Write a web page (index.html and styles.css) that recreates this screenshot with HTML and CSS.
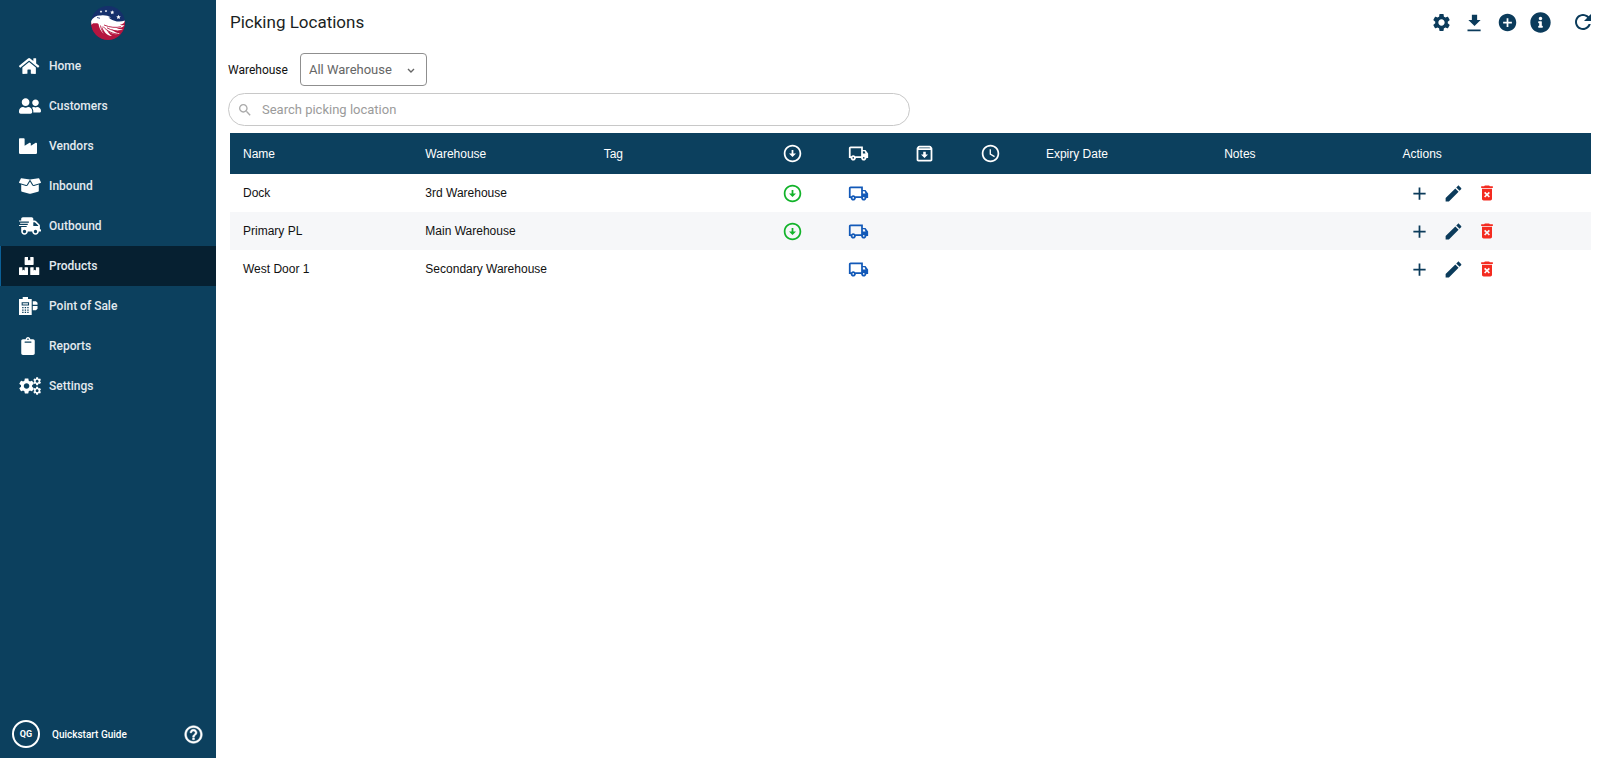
FILE: index.html
```html
<!DOCTYPE html>
<html lang="en">
<head>
<meta charset="utf-8">
<title>Picking Locations</title>
<link rel="stylesheet" href="styles.css">
</head>
<body>
<svg class="sprite" aria-hidden="true">
  <symbol id="gear" viewBox="0 0 24 24"><path d="M19.14 12.94c.04-.3.06-.61.06-.94 0-.32-.02-.64-.07-.94l2.03-1.58c.18-.14.23-.41.12-.61l-1.92-3.32c-.12-.22-.37-.29-.59-.22l-2.39.96c-.5-.38-1.03-.7-1.62-.94l-.36-2.54c-.04-.24-.24-.41-.48-.41h-3.84c-.24 0-.43.17-.47.41l-.36 2.54c-.59.24-1.13.57-1.62.94l-2.39-.96c-.22-.08-.47 0-.59.22L2.74 8.87c-.12.21-.08.47.12.61l2.03 1.58c-.05.3-.09.63-.09.94s.02.64.07.94l-2.03 1.58c-.18.14-.23.41-.12.61l1.92 3.32c.12.22.37.29.59.22l2.39-.96c.5.38 1.03.7 1.62.94l.36 2.54c.05.24.24.41.48.41h3.84c.24 0 .44-.17.47-.41l.36-2.54c.59-.24 1.13-.56 1.62-.94l2.39.96c.22.08.47 0 .59-.22l1.92-3.32c.12-.22.07-.47-.12-.61l-2.01-1.58zM12 15.6c-1.98 0-3.6-1.62-3.6-3.6s1.62-3.6 3.6-3.6 3.6 1.62 3.6 3.6-1.62 3.6-3.6 3.6z"/></symbol>
  <symbol id="down" viewBox="0 0 24 24"><path d="M12 4c4.41 0 8 3.59 8 8s-3.59 8-8 8-8-3.59-8-8 3.59-8 8-8m0-2C6.48 2 2 6.48 2 12s4.48 10 10 10 10-4.48 10-10S17.52 2 12 2zm1 10V8h-2v4H8l4 4 4-4h-3z"/></symbol>
  <symbol id="truck" viewBox="0 0 24 24"><path d="M20 8h-3V4H3c-1.1 0-2 .9-2 2v11h2c0 1.66 1.34 3 3 3s3-1.34 3-3h6c0 1.66 1.34 3 3 3s3-1.34 3-3h2v-5l-3-4zM6 18c-.55 0-1-.45-1-1s.45-1 1-1 1 .45 1 1-.45 1-1 1zm9-3H8.220C7.670 14.390 6.890 14 6 14s-1.670.39-2.220 1H3V6h12v9zm3 3c-.55 0-1-.45-1-1s.45-1 1-1 1 .45 1 1-.45 1-1 1zm-1-6V9.500h2l1 2.500H17z"/></symbol>
  <symbol id="plus" viewBox="0 0 24 24"><path d="M19 13h-6v6h-2v-6H5v-2h6V5h2v6h6v2z"/></symbol>
  <symbol id="pencil" viewBox="0 0 24 24"><path d="M3 17.25V21h3.75L17.81 9.94l-3.75-3.75L3 17.25zM20.71 7.04c.39-.39.39-1.02 0-1.41l-2.34-2.34c-.39-.39-1.02-.39-1.41 0l-1.83 1.83 3.75 3.75 1.83-1.83z"/></symbol>
  <symbol id="trash" viewBox="0 0 24 24"><path d="M6 19c0 1.1.9 2 2 2h8c1.1 0 2-.9 2-2V7H6v12zm2.46-7.12l1.41-1.41L12 12.59l2.12-2.12 1.41 1.41L13.41 14l2.12 2.12-1.41 1.41L12 15.41l-2.12 2.12-1.41-1.41L10.59 14l-2.13-2.12zM15.5 4l-1-1h-5l-1 1H5v2h14V4z"/></symbol>
  <symbol id="star" viewBox="0 0 24 24"><path d="M12 1l3.200 7.300 7.800.8-5.900 5.200 1.700 7.700L12 18l-6.800 4 1.700-7.700L1 9.100l7.800-.8z"/></symbol>
</svg>
<div class="app">
  <aside class="sidebar">
    <svg class="logo" viewBox="0 0 34 34" role="img" aria-label="Eagle logo">
      <defs><clipPath id="disc"><circle cx="17" cy="17" r="17"/></clipPath></defs>
      <g clip-path="url(#disc)">
        <rect width="34" height="34" fill="#15306b"/>
        <path d="M0 16C8 14 20 20 34 15V34H0Z" fill="#b5153f"/>
        <path d="M0 15C2 11 6 9 10 9.500C14 9 17 10 20 11.500L17.500 11.500L19.500 13C23 15.500 29 16.500 34 14.500C33.500 17 31.500 18.500 29 18.700C30.500 19.500 32 19.500 33.500 19C32 21.500 29 22.500 25 21.800C27 23 29.500 23.600 32 23C29 25.600 25 25.500 20.500 23.200C23 25.800 26 27 29 27.300C25 29.500 19.500 28 15.500 23.500C17 26.500 18.500 28.500 21 30C15 29.500 12.500 25 11 20.500C10.800 23 11.500 25.500 13 28C9.500 25.500 8 21 7.500 18C6 17 5 17.500 3.500 17.300C2.500 17 1.500 17 .5 19Z" fill="#fff"/>
        <path d="M13 19C19 21.500 25 22 30 20.700M12 20.500C16 25 22 28 27 28M9.500 19.500C10 23 12 27 15 30M16 21.800C20 24.300 26 25.500 30 24.500" fill="none" stroke="#b5153f" stroke-width=".9"/>
        <path d="M6 11.500L9 12.300" stroke="#15306b" stroke-width=".8"/>
      </g>
      <g fill="#fff"><use href="#star" x="8.500" y="4" width="3" height="3"/><use href="#star" x="13.500" y="3.500" width="3" height="3"/><use href="#star" x="19" y="4" width="4.500" height="4.500"/><use href="#star" x="25" y="8.500" width="5" height="5"/></g>
    </svg>
    <nav class="nav">
      <a class="nav-item" href="#"><svg preserveAspectRatio="xMinYMid" viewBox="0 0 576 512"><path d="M280.37 148.26L96 300.11V464a16 16 0 0 0 16 16l112.06-.29a16 16 0 0 0 15.92-16V368a16 16 0 0 1 16-16h64a16 16 0 0 1 16 16v95.64a16 16 0 0 0 16 16.05L464 480a16 16 0 0 0 16-16V300L295.67 148.26a12.19 12.19 0 0 0-15.3 0zM571.6 251.47L488 182.56V44.05a12 12 0 0 0-12-12h-56a12 12 0 0 0-12 12v72.61L318.47 43a48 48 0 0 0-61 0L4.34 251.47a12 12 0 0 0-1.6 16.9l25.5 31A12 12 0 0 0 45.15 301l235.22-193.74a12.19 12.19 0 0 1 15.3 0L530.9 301a12 12 0 0 0 16.9-1.6l25.5-31a12 12 0 0 0-1.7-16.93z"/></svg><span>Home</span></a>
      <a class="nav-item" href="#"><svg preserveAspectRatio="xMinYMid" viewBox="0 0 640 512"><path d="M192 256c61.9 0 112-50.1 112-112S253.9 32 192 32 80 82.1 80 144s50.1 112 112 112zm76.8 32h-8.3c-20.8 10-43.9 16-68.5 16s-47.6-6-68.5-16h-8.3C51.6 288 0 339.6 0 403.2V432c0 26.5 21.5 48 48 48h288c26.5 0 48-21.5 48-48v-28.8c0-63.6-51.6-115.2-115.2-115.2zM480 256c53 0 96-43 96-96s-43-96-96-96-96 43-96 96 43 96 96 96zm48 32h-3.8c-13.9 4.8-28.6 8-44.2 8s-30.3-3.2-44.2-8H432c-20.4 0-39.2 5.9-55.7 15.4 24.4 26.3 39.7 61.2 39.7 99.8v38.4c0 2.2-.5 4.3-.6 6.4H592c26.5 0 48-21.5 48-48 0-61.9-50.1-112-112-112z"/></svg><span>Customers</span></a>
      <a class="nav-item" href="#"><svg preserveAspectRatio="xMinYMid" viewBox="0 0 512 512"><path d="M475.115 163.781L336 252.309v-68.28c0-18.916-20.931-30.399-36.885-20.248L160 252.309V56c0-13.255-10.745-24-24-24H24C10.745 32 0 42.745 0 56v400c0 13.255 10.745 24 24 24h464c13.255 0 24-10.745 24-24V184.029c0-18.917-20.931-30.399-36.885-20.248z"/></svg><span>Vendors</span></a>
      <a class="nav-item" href="#"><svg preserveAspectRatio="xMinYMid" viewBox="0 0 640 512"><path d="M425.7 256c-16.9 0-32.8-9-41.4-23.4L320 126l-64.2 106.6c-8.7 14.5-24.6 23.5-41.5 23.5-4.5 0-9-.6-13.3-1.9L64 215v178c0 14.7 10 27.5 24.2 31l216.2 54.1c10.2 2.5 20.9 2.5 31 0L551.8 424c14.2-3.6 24.2-16.4 24.2-31V215l-137 39.1c-4.3 1.3-8.8 1.9-13.3 1.9zm212.6-112.2L586.8 41c-3.1-6.2-9.8-9.8-16.7-8.9L320 64l91.7 152.1c3.8 6.3 11.4 9.3 18.5 7.3l197.9-56.5c9.9-2.9 14.7-13.9 10.2-23.1zM53.2 41L1.7 143.8c-4.6 9.2.3 20.2 10.1 23l197.9 56.5c7.1 2 14.7-1 18.5-7.3L320 64 69.8 32.1c-6.9-.8-13.5 2.7-16.6 8.9z"/></svg><span>Inbound</span></a>
      <a class="nav-item" href="#"><svg preserveAspectRatio="xMinYMid" viewBox="0 0 640 512"><path d="M624 352h-16V243.9c0-12.7-5.1-24.9-14.1-33.9L494 110.1c-9-9-21.2-14.1-33.9-14.1H416V48c0-26.5-21.5-48-48-48H112C85.5 0 64 21.5 64 48v48H8c-4.4 0-8 3.6-8 8v16c0 4.4 3.6 8 8 8h272c4.4 0 8 3.6 8 8v16c0 4.4-3.6 8-8 8H40c-4.4 0-8 3.6-8 8v16c0 4.4 3.6 8 8 8h208c4.4 0 8 3.6 8 8v16c0 4.4-3.6 8-8 8H8c-4.4 0-8 3.6-8 8v16c0 4.4 3.6 8 8 8h208c4.4 0 8 3.6 8 8v16c0 4.4-3.6 8-8 8H64v128c0 53 43 96 96 96s96-43 96-96h128c0 53 43 96 96 96s96-43 96-96h48c8.8 0 16-7.2 16-16v-32c0-8.8-7.2-16-16-16zM160 464c-26.5 0-48-21.5-48-48s21.5-48 48-48 48 21.5 48 48-21.5 48-48 48zm320 0c-26.5 0-48-21.5-48-48s21.5-48 48-48 48 21.5 48 48-21.5 48-48 48zm80-208H416V144h44.1l99.9 99.9V256z"/></svg><span>Outbound</span></a>
      <a class="nav-item active" href="#" aria-current="page"><svg preserveAspectRatio="xMinYMid" viewBox="0 0 576 512"><path d="M560 288h-80v96l-32-21.3-32 21.3v-96h-80c-8.8 0-16 7.2-16 16v192c0 8.8 7.2 16 16 16h224c8.8 0 16-7.2 16-16V304c0-8.8-7.2-16-16-16zm-384-64h224c8.8 0 16-7.2 16-16V16c0-8.8-7.2-16-16-16h-80v96l-32-21.3L256 96V0h-80c-8.8 0-16 7.2-16 16v192c0 8.8 7.2 16 16 16zm64 64h-80v96l-32-21.3L96 384v-96H16c-8.8 0-16 7.2-16 16v192c0 8.8 7.2 16 16 16h224c8.8 0 16-7.2 16-16V304c0-8.8-7.2-16-16-16z"/></svg><span>Products</span></a>
      <a class="nav-item" href="#"><svg preserveAspectRatio="xMinYMid" viewBox="0 0 18 17"><path fill-rule="evenodd" d="M3.500 0h5v2H12v15H0V2h3.500zM2.500 5v3h7V5zM3 9.500v1.200h1.300V9.500zm2.400 0v1.200h1.300V9.500zm2.400 0v1.200h1.300V9.500zM3 11.700v1.200h1.300v-1.200zm2.400 0v1.200h1.300v-1.200zm2.400 0v1.200h1.300v-1.200zM3 13.900v1.200h1.300v-1.200zm2.400 0v1.200h1.300v-1.200zm2.400 0v1.200h1.300v-1.200z"/><path d="M3.500 6h5v1h-5zM13 4h3l1.500 1.500V7.300H13zM13 8.500h4.500v2.500L16 12.500h-3z"/></svg><span>Point of Sale</span></a>
      <a class="nav-item" href="#"><svg preserveAspectRatio="xMinYMid" viewBox="-64 0 512 512"><path d="M384 112v352c0 26.510-21.490 48-48 48H48c-26.510 0-48-21.490-48-48V112c0-26.510 21.490-48 48-48h80c0-35.290 28.710-64 64-64s64 28.710 64 64h80c26.510 0 48 21.490 48 48zM192 40c-13.255 0-24 10.745-24 24s10.745 24 24 24 24-10.745 24-24-10.745-24-24-24m96 114v-20a6 6 0 0 0-6-6H102a6 6 0 0 0-6 6v20a6 6 0 0 0 6 6h180a6 6 0 0 0 6-6z"/></svg><span>Reports</span></a>
      <a class="nav-item" href="#"><svg preserveAspectRatio="xMinYMid" viewBox="0 0 640 512"><use href="#gear" x="-50" y="-14" width="540" height="540"/><use href="#gear" x="385" y="-25" width="285" height="285"/><use href="#gear" x="385" y="252" width="285" height="285"/></svg><span>Settings</span></a>
    </nav>
    <footer class="guide">
      <span class="avatar">QG</span>
      <a class="guide-link" href="#">Quickstart Guide</a>
      <button class="icon-btn help" type="button" aria-label="Help"><svg viewBox="0 0 24 24"><path stroke="currentColor" stroke-width=".6" d="M11 18h2v-2h-2v2zm1-16C6.480 2 2 6.480 2 12s4.480 10 10 10 10-4.480 10-10S17.520 2 12 2zm0 18c-4.410 0-8-3.590-8-8s3.590-8 8-8 8 3.590 8 8-3.590 8-8 8zm0-14c-2.210 0-4 1.790-4 4h2c0-1.100.9-2 2-2s2 .9 2 2c0 2-3 1.750-3 5h2c0-2.250 3-2.500 3-5 0-2.210-1.790-4-4-4z"/></svg></button>
    </footer>
  </aside>
  <main class="main">
    <header class="toolbar">
      <h1>Picking Locations</h1>
      <div class="tools">
        <button class="icon-btn" type="button" aria-label="Settings"><svg><use href="#gear"/></svg></button>
        <button class="icon-btn" type="button" aria-label="Download"><svg viewBox="0 0 24 24"><path d="M5 20h14v1.900H4v-1.900zM19 9h-4V3H9v6H5l7 7 7-7z"/></svg></button>
        <button class="icon-btn" type="button" aria-label="Add"><svg viewBox="0 0 24 24"><path d="M12 2C6.480 2 2 6.480 2 12s4.480 10 10 10 10-4.480 10-10S17.520 2 12 2zm5 11h-4v4h-2v-4H7v-2h4V7h2v4h4v2z"/></svg></button>
        <button class="icon-btn" type="button" aria-label="Info"><svg viewBox="0 0 512 512"><path d="M256 8C119.043 8 8 119.083 8 256c0 136.997 111.043 248 248 248s248-111.003 248-248C504 119.083 392.957 8 256 8zm0 110c23.196 0 42 18.804 42 42s-18.804 42-42 42-42-18.804-42-42 18.804-42 42-42zm56 254c0 6.627-5.373 12-12 12h-88c-6.627 0-12-5.373-12-12v-24c0-6.627 5.373-12 12-12h12v-64h-12c-6.627 0-12-5.373-12-12v-24c0-6.627 5.373-12 12-12h64c6.627 0 12 5.373 12 12v100h12c6.627 0 12 5.373 12 12v24z"/></svg></button>
        <button class="icon-btn refresh" type="button" aria-label="Refresh"><svg viewBox="0 0 24 24"><path d="M17.650 6.350C16.200 4.900 14.210 4 12 4c-4.420 0-7.990 3.580-7.990 8s3.570 8 7.990 8c3.730 0 6.840-2.550 7.730-6h-2.080c-.82 2.330-3.040 4-5.650 4-3.310 0-6-2.690-6-6s2.690-6 6-6c1.660 0 3.140.69 4.220 1.780L13 11h7V4l-2.350 2.350z"/></svg></button>
      </div>
    </header>
    <section class="filters">
      <div class="filter">
        <label for="warehouse">Warehouse</label>
        <div class="select-wrap">
          <select id="warehouse"><option>All Warehouse</option></select>
          <svg class="chevron" viewBox="0 0 8 5"><path d="M1 1l3 3 3-3"/></svg>
        </div>
      </div>
      <div class="search">
        <svg viewBox="0 0 24 24"><path d="M15.500 14h-.79l-.28-.27C15.410 12.590 16 11.110 16 9.500 16 5.910 13.090 3 9.500 3S3 5.910 3 9.500 5.910 16 9.500 16c1.610 0 3.090-.59 4.230-1.570l.27.28v.79l5 4.990L20.490 19l-4.990-5zm-6 0C7.010 14 5 11.990 5 9.500S7.010 5 9.500 5 14 7.010 14 9.500 11.990 14 9.500 14z"/></svg>
        <input type="search" placeholder="Search picking location" aria-label="Search picking location">
      </div>
    </section>
    <table class="grid">
      <colgroup><col class="c-name"><col class="c-text"><col class="c-text"><col class="c-icon"><col class="c-icon"><col class="c-icon"><col class="c-icon"><col class="c-text"><col class="c-text"><col></colgroup>
      <thead>
        <tr>
          <th>Name</th><th>Warehouse</th><th>Tag</th>
          <th aria-label="Receiving"><svg class="ico"><use href="#down"/></svg></th>
          <th aria-label="Shipping"><svg class="ico"><use href="#truck"/></svg></th>
          <th aria-label="Storage"><svg class="ico" viewBox="0 0 24 24"><path d="M20.540 5.230l-1.390-1.680C18.880 3.210 18.470 3 18 3H6c-.47 0-.88.21-1.160.55L3.460 5.230C3.170 5.570 3 6.020 3 6.500V19c0 1.100.9 2 2 2h14c1.100 0 2-.9 2-2V6.500c0-.48-.17-.93-.46-1.270zM6.240 5h11.520l.83 1H5.420l.82-1zM5 19V8h14v11H5zm8.450-9h-2.900v3H8l4 4 4-4h-2.550z"/></svg></th>
          <th aria-label="Expiry"><svg class="ico" viewBox="0 0 24 24"><path d="M11.990 2C6.470 2 2 6.480 2 12s4.470 10 9.990 10C17.520 22 22 17.520 22 12S17.520 2 11.990 2zM12 20c-4.420 0-8-3.580-8-8s3.580-8 8-8 8 3.580 8 8-3.580 8-8 8zm.5-13H11v6l5.250 3.150.75-1.230-4.500-2.670z"/></svg></th>
          <th>Expiry Date</th><th>Notes</th><th>Actions</th>
        </tr>
      </thead>
      <tbody>
        <tr>
          <td>Dock</td><td>3rd Warehouse</td><td></td>
          <td><svg class="ico green"><use href="#down"/></svg></td><td><svg class="ico blue"><use href="#truck"/></svg></td><td></td><td></td><td></td><td></td>
          <td><div class="actions"><button class="icon-btn" type="button" aria-label="Add"><svg><use href="#plus"/></svg></button><button class="icon-btn" type="button" aria-label="Edit"><svg><use href="#pencil"/></svg></button><button class="icon-btn danger" type="button" aria-label="Delete"><svg><use href="#trash"/></svg></button></div></td>
        </tr>
        <tr>
          <td>Primary PL</td><td>Main Warehouse</td><td></td>
          <td><svg class="ico green"><use href="#down"/></svg></td><td><svg class="ico blue"><use href="#truck"/></svg></td><td></td><td></td><td></td><td></td>
          <td><div class="actions"><button class="icon-btn" type="button" aria-label="Add"><svg><use href="#plus"/></svg></button><button class="icon-btn" type="button" aria-label="Edit"><svg><use href="#pencil"/></svg></button><button class="icon-btn danger" type="button" aria-label="Delete"><svg><use href="#trash"/></svg></button></div></td>
        </tr>
        <tr>
          <td>West Door 1</td><td>Secondary Warehouse</td><td></td>
          <td></td><td><svg class="ico blue"><use href="#truck"/></svg></td><td></td><td></td><td></td><td></td>
          <td><div class="actions"><button class="icon-btn" type="button" aria-label="Add"><svg><use href="#plus"/></svg></button><button class="icon-btn" type="button" aria-label="Edit"><svg><use href="#pencil"/></svg></button><button class="icon-btn danger" type="button" aria-label="Delete"><svg><use href="#trash"/></svg></button></div></td>
        </tr>
      </tbody>
    </table>
  </main>
</div>
</body>
</html>
```
FILE: styles.css
```css
* { box-sizing: border-box; }
body { margin: 0; font-family: Roboto, sans-serif; color: #111; background: #fff; }
svg { display: block; fill: currentColor; }
a { color: inherit; text-decoration: none; }
button, input, select { font: inherit; color: inherit; }
.sprite { display: none; }

.app { display: flex; min-height: 100vh; }

.sidebar { display: flex; flex-direction: column; flex: none; width: 216px; background: #0c405e; color: #fff; }
.logo { width: 34px; height: 34px; margin: 6px auto; flex: none; }
.nav { display: flex; flex-direction: column; }
.nav-item { display: flex; align-items: center; height: 40px; padding-left: 18px; border-left: 1px solid transparent; font-size: 12px; font-weight: 500; color: #e3eaef; }
.nav-item svg { width: 22px; height: 18px; margin-right: 8px; color: #fff; }
.nav-item.active { background: #062031; border-left-color: #0b5f96; }
.guide { display: flex; align-items: center; height: 48px; margin-top: auto; padding: 0 12px; font-size: 10px; font-weight: 500; }
.avatar { display: flex; align-items: center; justify-content: center; width: 28px; height: 28px; border: 2px solid #fff; border-radius: 50%; font-size: 9px; font-weight: 700; }
.guide-link { margin-left: 12px; }

.icon-btn { display: flex; align-items: center; justify-content: center; width: 34px; height: 32px; padding: 0; border: 0; background: none; color: #0b3b5b; cursor: pointer; }
.icon-btn svg { width: 21px; height: 21px; }
.icon-btn.danger { color: #f42b20; }
.icon-btn.danger svg { width: 20px; height: 20px; }
.icon-btn.help { width: 21px; margin-left: auto; color: #fff; }

.main { flex: 1; min-width: 0; padding: 0 9px 0 12px; }
.toolbar { display: flex; align-items: center; justify-content: space-between; height: 44px; padding-left: 2px; }
h1 { margin: 0; font-size: 17px; font-weight: 400; color: #1b1f23; }
.tools { display: flex; margin-right: -4px; }
.tools .icon-btn { width: 33px; }
.tools .refresh { width: 24px; margin-left: 14px; }
.tools .refresh svg { width: 24px; height: 24px; }

.filters { display: flex; flex-direction: column; gap: 7px; padding: 9px 0 7px; }
.filter { display: flex; align-items: center; gap: 12px; font-size: 12px; }
.select-wrap { position: relative; }
.select-wrap select { display: block; height: 33px; width: 127px; padding: 0 24px 0 8px; border: 1px solid #8f8f8f; border-radius: 4px; background: #fff; appearance: none; font-size: 13px; color: #666; }
.chevron { position: absolute; right: 12px; top: 15px; width: 8px; height: 5px; fill: none; stroke: #666; stroke-width: 1.4; pointer-events: none; }
.search { display: flex; align-items: center; gap: 9px; width: 50%; height: 33px; padding: 0 8px; border: 1px solid #c8c8c8; border-radius: 17px; }
.search svg { width: 16px; height: 16px; color: #aaa; }
.search input { flex: 1; min-width: 0; padding: 0; border: 0; outline: 0; background: none; font-size: 13px; }
.search input::placeholder { color: #9b9b9b; }

.grid { width: calc(100% - 2px); margin-left: 2px; border-collapse: collapse; table-layout: fixed; font-family: "Liberation Sans", Arial, sans-serif; font-size: 12px; }
.grid th, .grid td { padding: 0 0 0 13px; text-align: left; font-weight: 400; white-space: nowrap; }
.grid th { height: 41px; background: #0c405e; color: #fff; }
.grid td { height: 38px; }
.grid tbody tr:nth-child(even) { background: #f6f7f9; }
.c-name { width: 13.4%; }
.c-text { width: 13.1%; }
.c-icon { width: 66px; }
.ico { width: 21px; height: 21px; }
.green { color: #12b32a; }
.blue { color: #1259b8; }
.actions { display: flex; }
```
